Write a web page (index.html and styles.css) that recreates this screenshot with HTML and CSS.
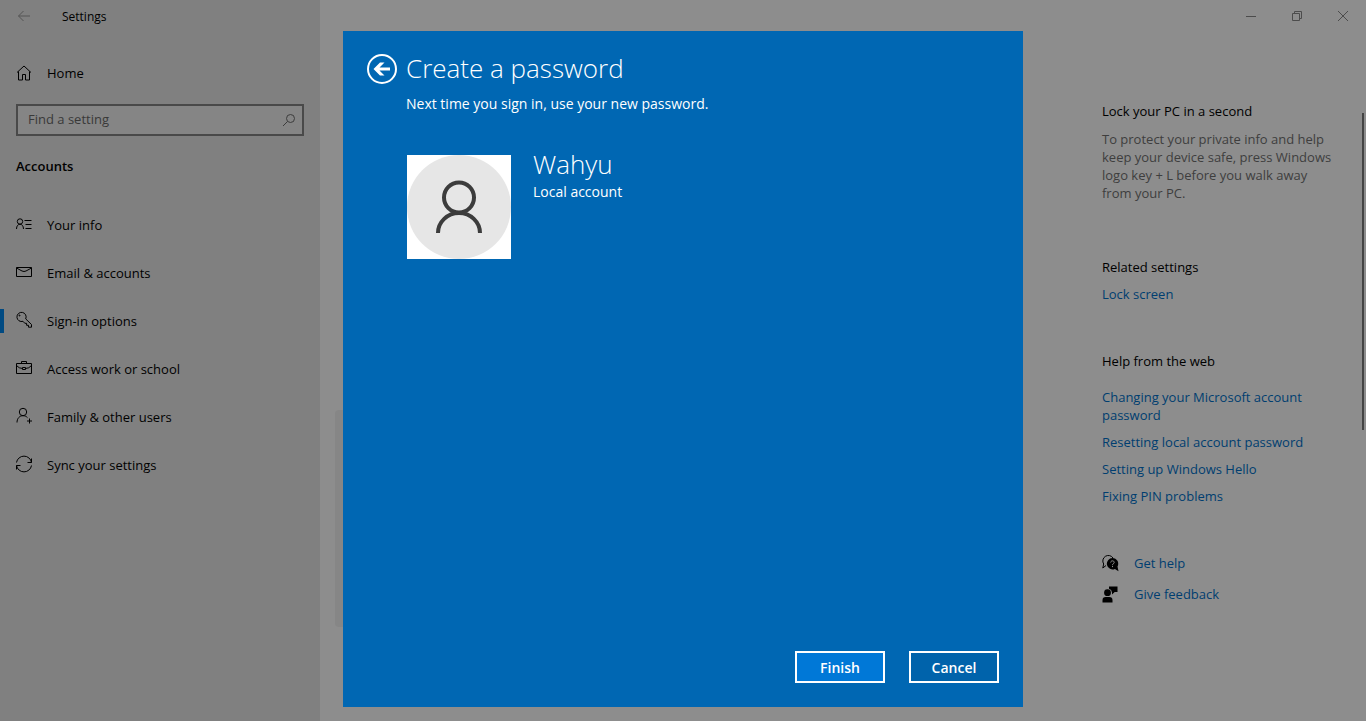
FILE: index.html
```
<!DOCTYPE html>
<html lang="en">
<head>
    <meta charset="UTF-8">
    <meta name="viewport" content="width=device-width, initial-scale=1.0">
    <title>Settings</title>
    <link rel="stylesheet" href="styles.css">
</head>
<body>
    <div class="window">
        <aside class="sidebar">
            <header class="title_bar">
                <button class="back_btn" aria-label="Back">
                    <svg width="14" height="12" viewBox="0 0 14 12"><path d="M13 6H1.500M6.500 1L1.500 6l5 5"/></svg>
                </button>
                <span class="app_name">Settings</span>
            </header>
            <a class="nav_item home" href="#">
                <svg width="18" height="18" viewBox="0 0 18 18"><path d="M2 8.500L9 2l7 6.500M3.500 7.500v8.500h4v-5.500h3V16h4V7.500"/></svg>
                Home
            </a>
            <div class="search">
                <input type="text" placeholder="Find a setting" aria-label="Find a setting">
                <svg width="14" height="14" viewBox="0 0 14 14"><circle cx="8.500" cy="5.500" r="4"/><path d="M5.500 8.500L1 13"/></svg>
            </div>
            <h2 class="section_name">Accounts</h2>
            <nav class="menu">
                <a class="nav_item" href="#">
                    <svg width="18" height="18" viewBox="0 0 18 18"><circle cx="5" cy="6.500" r="2.700"/><path d="M1.500 14c0-6.400 7-6.400 7 0M9.500 5.500h7M10.500 9.500h6M10.500 13.500h6"/></svg>
                    Your info
                </a>
                <a class="nav_item" href="#">
                    <svg width="18" height="18" viewBox="0 0 18 18"><path d="M1.500 4.500h15v9h-15zM1.500 5l5.500 3q2 1 4 0l5.500-3"/></svg>
                    Email &amp; accounts
                </a>
                <a class="nav_item active" href="#">
                    <svg width="18" height="18" viewBox="0 0 18 18"><path d="M10.700 7.900l5.800 5.600v2.700h-3v-1.900h-1.900v-2H9.800L8 10.300A4.600 4.600 0 1 1 10.700 7.900z"/><circle cx="4.500" cy="4.500" r="0.500"/></svg>
                    Sign-in options
                </a>
                <a class="nav_item" href="#">
                    <svg width="18" height="18" viewBox="0 0 18 18"><path d="M1.500 4.500h15v10h-15zM6.500 4.500v-2h5v2M1.500 6.500q2.500 3 6 3M16.500 6.500q-2.500 3-6 3M7.500 8.500h3v2h-3z"/></svg>
                    Access work or school
                </a>
                <a class="nav_item" href="#">
                    <svg width="18" height="18" viewBox="0 0 18 18"><circle cx="8" cy="5" r="3.700"/><path d="M2 15.500c0-4 2.500-6.800 6-6.800 2 0 3.500.8 4.500 2M14.500 11.500v5M12 14h5"/></svg>
                    Family &amp; other users
                </a>
                <a class="nav_item" href="#">
                    <svg width="18" height="18" viewBox="0 0 18 18"><path d="M1.500 7.500a7.600 7.600 0 0 1 15 0M16.500 3.500v4h-4M16.500 10.500a7.600 7.600 0 0 1-15 0M1.500 14.500v-4h4"/></svg>
                    Sync your settings
                </a>
            </nav>
        </aside>

        <main class="page">
            <header class="window_controls">
                <button aria-label="Minimize"><svg width="12" height="12" viewBox="0 0 12 12"><path d="M1 6.500h10"/></svg></button>
                <button aria-label="Restore"><svg width="12" height="12" viewBox="0 0 12 12"><path d="M1.500 3.500h7v7h-7zM3.500 3.500v-2h7v7h-2"/></svg></button>
                <button aria-label="Close"><svg width="12" height="12" viewBox="0 0 12 12"><path d="M1 1l10 10M11 1L1 11"/></svg></button>
            </header>
            <div class="content">
                <section class="card"></section>
                <div class="info">
                    <section class="info_block">
                        <h3>Lock your PC in a second</h3>
                        <p>To protect your private info and help keep your device safe, press Windows logo key + L before you walk away from your PC.</p>
                    </section>
                    <section class="info_block">
                        <h3>Related settings</h3>
                        <a href="#">Lock screen</a>
                    </section>
                    <section class="info_block web_help">
                        <h3>Help from the web</h3>
                        <a href="#">Changing your Microsoft account password</a>
                        <a href="#">Resetting local account password</a>
                        <a href="#">Setting up Windows Hello</a>
                        <a href="#">Fixing PIN problems</a>
                    </section>
                    <section class="support">
                        <a href="#">
                            <svg width="17" height="17" viewBox="0 0 17 17"><path class="line" d="M4 10.500L.8 13l.9-4A5.200 5.200 0 1 1 11 3"/><path d="M10.500 3a5.700 5.700 0 0 1 5 8.500l1 4.700-3.600-2.300A5.700 5.700 0 1 1 10.500 3z"/><path class="mark" d="M8.700 7.500c.1-2.300 3.600-2.100 3.500 0 0 1.200-1.700 1-1.700 2.600M10.500 10.900v1.200"/></svg>
                            Get help
                        </a>
                        <a href="#">
                            <svg width="17" height="17" viewBox="0 0 17 17"><circle cx="5.500" cy="6.700" r="3.400"/><path d="M.5 16.500v-2.300q0-3.200 3.200-3.200h3.600q3.200 0 3.200 3.200v2.300zM7 .5h8.500V6h-2.800l-2.700 2.500V6.500Q9.700 3.500 7 2.700z"/></svg>
                            Give feedback
                        </a>
                    </section>
                </div>
                <div class="scroll_track"><div class="scroll_thumb"></div></div>
            </div>
        </main>
    </div>

    <div class="overlay">
        <div class="dialog" role="dialog" aria-labelledby="dialog_title">
            <div class="dialog_head">
                <button class="circle_btn" aria-label="Go back">
                    <svg width="32" height="32" viewBox="0 0 32 32"><circle cx="16" cy="16" r="14"/><path class="arrow" d="M7.500 16l6.500-6.500h4.500L13.500 14.500h10.500v3H13.500l5 5H14z"/></svg>
                </button>
                <h1 id="dialog_title">Create a password</h1>
            </div>
            <p class="dialog_text">Next time you sign in, use your new password.</p>
            <div class="user">
                <svg class="avatar" width="104" height="104" viewBox="0 0 104 104">
                    <circle class="disc" cx="52" cy="52" r="52"/>
                    <circle cx="52" cy="42.500" r="15"/>
                    <path d="M31 78a21 20 0 0 1 42 0"/>
                </svg>
                <div>
                    <p class="user_name">Wahyu</p>
                    <p class="user_type">Local account</p>
                </div>
            </div>
            <div class="dialog_actions">
                <button class="finish_btn">Finish</button>
                <button class="cancel_btn">Cancel</button>
            </div>
        </div>
    </div>
</body>
</html>
```
FILE: styles.css
```
* {
    box-sizing: border-box;
}
body {
    margin: 0;
    font-family: "Open Sans", "Noto Sans", sans-serif;
    font-size: 13px;
    line-height: 18px;
    color: #000;
}
h1, h2, h3, p {
    margin: 0;
    font-weight: 400;
}
a {
    color: #003e70;
    text-decoration: none;
}
button {
    font-family: inherit;
    padding: 0;
    border: none;
    background: none;
}
svg {
    display: block;
    flex-shrink: 0;
    fill: none;
    stroke: currentColor;
}
.window {
    min-height: 100vh;
    display: grid;
    grid-template-columns: 320px 1fr;
}

/* left side */
.sidebar {
    background-color: #808080;
}
.title_bar {
    height: 32px;
    display: flex;
    align-items: center;
}
.back_btn {
    width: 48px;
    height: 32px;
    display: flex;
    align-items: center;
    justify-content: center;
    color: #555;
}
.app_name {
    padding: 2px 0 0 14px;
    font-size: 12px;
}
.nav_item {
    height: 48px;
    padding-left: 15px;
    display: flex;
    align-items: center;
    gap: 14px;
    color: #000;
}
.home {
    margin-top: 17px;
}
.search {
    height: 32px;
    margin: 7px 16px 0;
    padding: 0 6px 0 10px;
    display: flex;
    align-items: center;
    border: 2px solid #494949;
    background-color: #858585;
    color: #3c3c3c;
}
.search input {
    flex: 1;
    min-width: 0;
    padding: 0 0 2px;
    border: none;
    outline: none;
    background: none;
    font: inherit;
}
.search input::placeholder {
    color: #393939;
}
.section_name {
    margin: 21px 16px 0;
    font-size: 13px;
    font-weight: 600;
}
.menu {
    margin-top: 26px;
}
.menu svg {
    margin-bottom: 2px;
}
.active {
    padding-left: 11px;
}
.active::before {
    content: "";
    width: 4px;
    height: 24px;
    margin: 0 -3px 0 -11px;
    background-color: #004a82;
}

/* right side */
.page {
    display: flex;
    flex-direction: column;
    background-color: #8d8d8d;
}
.window_controls {
    display: flex;
    justify-content: flex-end;
}
.window_controls button {
    width: 46px;
    height: 32px;
    display: flex;
    align-items: center;
    justify-content: center;
    color: #4c4c4c;
}
.content {
    flex: 1;
    display: flex;
}
.card {
    flex: 1;
    height: 217px;
    margin: 378px 79px 0 15px;
    border-radius: 4px;
    background-color: #868686;
}
.info {
    width: 236px;
    padding-top: 70px;
}
.info_block {
    margin-bottom: 49px;
}
.info_block h3 {
    font-size: 13px;
    margin-bottom: 9px;
}
.info_block p {
    padding: 1px 0 7px;
    color: #3e3e3e;
}
.info_block a {
    display: block;
    margin-bottom: 9px;
}
.web_help h3 {
    margin-bottom: 18px;
}
.support a {
    display: flex;
    align-items: center;
    gap: 15px;
    margin-bottom: 13px;
}
.support svg {
    color: #000;
    fill: currentColor;
    stroke: none;
}
.support .line {
    fill: none;
    stroke: currentColor;
}
.support .mark {
    fill: none;
    stroke: #8d8d8d;
}
.scroll_track {
    width: 28px;
    padding: 81px 2px 0 0;
}
.scroll_thumb {
    width: 2px;
    height: 317px;
    margin-left: auto;
    background-color: #444;
}

/* password dialog */
.overlay {
    position: fixed;
    inset: 0;
    padding: 31px 0 14px;
    display: flex;
    justify-content: center;
}
.dialog {
    width: 680px;
    max-width: 100%;
    padding: 22px 24px 24px;
    display: flex;
    flex-direction: column;
    background-color: #0067b3;
    color: #fff;
    font-size: 14px;
}
.dialog_head {
    display: flex;
    align-items: center;
    gap: 8px;
}
.circle_btn {
    margin-left: -1px;
    color: #fff;
}
.circle_btn svg {
    stroke-width: 2;
}
.circle_btn .arrow {
    fill: currentColor;
    stroke: none;
}
.dialog_head h1 {
    padding-bottom: 2px;
    font-size: 26px;
    line-height: 30px;
    font-weight: 300;
}
.dialog_text {
    margin: 10px 0 0 39px;
}
.user {
    margin: 42px 0 0 40px;
    display: flex;
    gap: 22px;
}
.avatar {
    background-color: #fff;
    stroke: #3c3c3c;
    stroke-width: 4;
}
.avatar .disc {
    fill: #e6e6e6;
    stroke: none;
}
.user_name {
    margin-top: -6px;
    padding-bottom: 2px;
    font-size: 26px;
    line-height: 30px;
    font-weight: 300;
}
.user_type {
    margin-top: 2px;
}
.dialog_actions {
    margin-top: auto;
    display: flex;
    justify-content: flex-end;
    gap: 24px;
}
.dialog_actions button {
    width: 90px;
    height: 32px;
    border: 2px solid #fff;
    color: #fff;
    font-size: 14px;
    font-weight: 600;
}
.dialog_actions .finish_btn {
    background-color: #0078d7;
}
.dialog_actions .cancel_btn {
    background-color: #0063ab;
}
```
